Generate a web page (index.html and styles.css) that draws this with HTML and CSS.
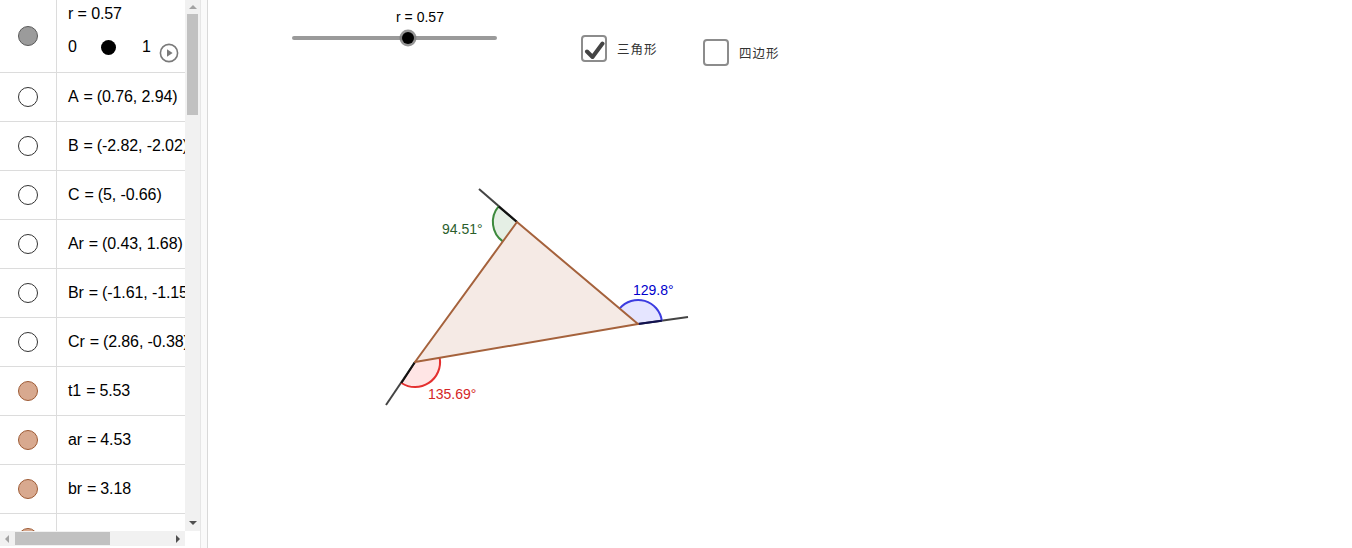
FILE: index.html
```html
<!DOCTYPE html>
<html lang="zh">
<head>
<meta charset="utf-8">
<title>GeoGebra</title>
<link rel="stylesheet" href="styles.css">
</head>
<body>
<div class="app">
  <aside class="algebra">
    <div class="list">
      <div class="row row-slider">
        <div class="marble-cell"><span class="marble marble-gray"></span></div>
        <div class="content slider-content">
          <div class="slider-name">r = 0.57</div>
          <div class="slider-line">
            <span class="min">0</span>
            <span class="dot"></span>
            <span class="max">1</span>
            <svg class="play" width="20" height="20" viewBox="0 0 20 20"><circle cx="10" cy="10" r="8.6" fill="none" stroke="#7a7a7a" stroke-width="1.6"/><path d="M8 6.2 L13.6 10 L8 13.8 Z" fill="#7a7a7a"/></svg>
          </div>
        </div>
      </div>
      <div class="row"><div class="marble-cell"><span class="marble"></span></div><div class="content">A<span class="eq">=</span>(0.76, 2.94)</div></div>
      <div class="row"><div class="marble-cell"><span class="marble"></span></div><div class="content">B<span class="eq">=</span>(-2.82, -2.02)</div></div>
      <div class="row"><div class="marble-cell"><span class="marble"></span></div><div class="content">C<span class="eq">=</span>(5, -0.66)</div></div>
      <div class="row"><div class="marble-cell"><span class="marble"></span></div><div class="content">Ar<span class="eq">=</span>(0.43, 1.68)</div></div>
      <div class="row"><div class="marble-cell"><span class="marble"></span></div><div class="content">Br<span class="eq">=</span>(-1.61, -1.15)</div></div>
      <div class="row"><div class="marble-cell"><span class="marble"></span></div><div class="content">Cr<span class="eq">=</span>(2.86, -0.38)</div></div>
      <div class="row"><div class="marble-cell"><span class="marble marble-brown"></span></div><div class="content">t1<span class="eq">=</span>5.53</div></div>
      <div class="row"><div class="marble-cell"><span class="marble marble-brown"></span></div><div class="content">ar<span class="eq">=</span>4.53</div></div>
      <div class="row"><div class="marble-cell"><span class="marble marble-brown"></span></div><div class="content">br<span class="eq">=</span>3.18</div></div>
      <div class="row"><div class="marble-cell"><span class="marble marble-brown"></span></div><div class="content"></div></div>
    </div>
    <div class="vscroll">
      <span class="arrow arrow-up"></span>
      <div class="vtrack"><div class="vthumb"></div></div>
      <span class="arrow arrow-down"></span>
    </div>
    <div class="hscroll">
      <span class="arrow arrow-left"></span>
      <div class="htrack"><div class="hthumb"></div></div>
      <span class="arrow arrow-right"></span>
    </div>
    <div class="corner"></div>
  </aside>
  <div class="splitter"></div>
  <main class="graphics">
    <svg class="canvas" width="1144" height="548" viewBox="208 0 1144 548">
      <!-- slider r -->
      <text x="420" y="22" class="slider-label" text-anchor="middle">r = 0.57</text>
      <line x1="294" y1="38" x2="495" y2="38" stroke="#9a9a9a" stroke-width="4" stroke-linecap="round"/>
      <circle cx="408" cy="38" r="8.5" fill="#7a7a7a" fill-opacity="0.8"/>
      <circle cx="408" cy="38" r="6" fill="#000"/>

      <!-- triangle -->
      <polygon points="517,222 638,324 415,362" fill="#993300" fill-opacity="0.1" stroke="none"/>

      <!-- extension lines -->
      <line x1="517" y1="222" x2="479" y2="189" stroke="#444" stroke-width="2"/>
      <line x1="638" y1="324" x2="688" y2="317" stroke="#444" stroke-width="2"/>
      <line x1="415" y1="362" x2="386" y2="405" stroke="#444" stroke-width="2"/>

      <!-- angle at top (green) -->
      <path d="M517 222 L498.6 206.4 A24 24 0 0 0 502.8 241.4 Z" fill="#006400" fill-opacity="0.1" stroke="none"/>
      <path d="M498.6 206.4 A24 24 0 0 0 502.8 241.4" fill="none" stroke="#3d8a3d" stroke-width="2"/>
      <line x1="517" y1="222" x2="498.6" y2="206.4" stroke="#111" stroke-width="2"/>

      <!-- angle at right (blue) -->
      <path d="M638 324 L661.8 320.7 A24 24 0 0 0 619.7 308.4 Z" fill="#0000ff" fill-opacity="0.1" stroke="none"/>
      <path d="M661.8 320.7 A24 24 0 0 0 619.7 308.4" fill="none" stroke="#3c3ce0" stroke-width="2"/>
      <line x1="638" y1="324" x2="661.8" y2="320.7" stroke="#101050" stroke-width="2"/>

      <!-- angle at left (red) -->
      <path d="M415 362 L439.7 357.8 A25 25 0 0 1 401.4 383 Z" fill="#ff0000" fill-opacity="0.1" stroke="none"/>
      <path d="M439.7 357.8 A25 25 0 0 1 401.4 383" fill="none" stroke="#e43030" stroke-width="2"/>
      <line x1="415" y1="362" x2="401.4" y2="383" stroke="#111" stroke-width="2"/>

      <!-- triangle edges -->
      <polygon points="517,222 638,324 415,362" fill="none" stroke="#a5623c" stroke-width="2" stroke-linejoin="round"/>

      <!-- angle labels -->
      <text x="442" y="234" class="angle-label" fill="#2b5e2b">94.51°</text>
      <text x="633" y="295" class="angle-label" fill="#0000cc">129.8°</text>
      <text x="428" y="399" class="angle-label" fill="#d42626">135.69°</text>
    </svg>
    <label class="check check-tri">
      <span class="box box-checked"><svg width="22" height="22" viewBox="0 0 22 22"><path d="M4 13.5 L9.5 19 L19.5 5.5" fill="none" stroke="#444" stroke-width="4" stroke-linecap="round" stroke-linejoin="round"/></svg></span>
      <span class="check-text">三角形</span>
    </label>
    <label class="check check-quad">
      <span class="box"></span>
      <span class="check-text">四边形</span>
    </label>
  </main>
</div>
</body>
</html>
```
FILE: styles.css
```css
html, body {
  margin: 0;
  padding: 0;
  background: #fff;
}
body {
  font-family: "Liberation Sans", Arial, sans-serif;
  color: #000;
  overflow: hidden;
}
.app {
  display: flex;
  width: 1352px;
  height: 548px;
}
.algebra {
  width: 200px;
  height: 548px;
  display: grid;
  grid-template-columns: 185px 15px;
  grid-template-rows: 531px 15px 1fr;
  background: #fff;
}
.list {
  overflow: hidden;
  grid-column: 1;
  grid-row: 1;
}
.row {
  display: flex;
  height: 48px;
  border-bottom: 1px solid #dcdcdc;
}
.row-slider {
  height: 72px;
}
.marble-cell {
  width: 56px;
  flex: none;
  border-right: 1px solid #dcdcdc;
  display: flex;
  align-items: center;
  justify-content: center;
}
.marble {
  width: 18px;
  height: 18px;
  border-radius: 50%;
  border: 1.3px solid #333;
  background: #fff;
  display: block;
}
.marble-gray {
  background: #9b9b9b;
  border-color: #5a5a5a;
}
.marble-brown {
  background: #d8a98f;
  border-color: #9e5b35;
}
.content {
  padding-left: 11px;
  display: flex;
  align-items: center;
  font-size: 16px;
  white-space: nowrap;
  overflow: hidden;
  flex: 1;
  letter-spacing: -0.1px;
}
.eq {
  margin: 0 4px 0 5px;
}
.slider-content {
  flex-direction: column;
  align-items: flex-start;
  justify-content: flex-start;
}
.slider-name {
  margin-top: 5px;
  line-height: 18px;
}
.slider-line {
  display: flex;
  align-items: center;
  margin-top: 15px;
  height: 18px;
}
.slider-line .min {
  width: 33px;
}
.slider-line .dot {
  width: 15px;
  height: 15px;
  border-radius: 50%;
  background: #000;
  display: block;
}
.slider-line .max {
  margin-left: 26px;
}
.slider-line .play {
  margin-left: 8px;
  margin-top: 12px;
  display: block;
}
.vscroll {
  grid-column: 2;
  grid-row: 1;
  background: #f1f1f1;
  display: flex;
  flex-direction: column;
  align-items: center;
}
.vtrack {
  flex: 1;
  width: 100%;
  padding: 0 2px;
  box-sizing: border-box;
}
.vthumb {
  height: 101px;
  background: #c1c1c1;
}
.hscroll {
  grid-column: 1;
  grid-row: 2;
  background: #f1f1f1;
  display: flex;
  align-items: center;
}
.htrack {
  flex: 1;
  height: 100%;
  padding: 1px 0;
  box-sizing: border-box;
}
.hthumb {
  margin-left: 1px;
  width: 95px;
  height: 100%;
  background: #c1c1c1;
}
.corner {
  grid-column: 2;
  grid-row: 2;
  background: #fff;
}
.arrow {
  width: 0;
  height: 0;
  flex: none;
  display: block;
}
.arrow-up {
  margin: 5px 0 5px;
  border-left: 4px solid transparent;
  border-right: 4px solid transparent;
  border-bottom: 4px solid #a3a3a3;
}
.arrow-down {
  margin: 6px 0 6px;
  border-left: 4px solid transparent;
  border-right: 4px solid transparent;
  border-top: 4px solid #505050;
}
.arrow-left {
  margin: 0 5px 0 5px;
  border-top: 4px solid transparent;
  border-bottom: 4px solid transparent;
  border-right: 4px solid #a3a3a3;
}
.arrow-right {
  margin: 0 5px 0 5px;
  border-top: 4px solid transparent;
  border-bottom: 4px solid transparent;
  border-left: 4px solid #505050;
}
.splitter {
  width: 6px;
  flex: none;
  border-left: 1px solid #e6e6e6;
  border-right: 1px solid #d9d9d9;
  background: #fafafa;
}
.graphics {
  position: relative;
  flex: 1;
  height: 548px;
  overflow: hidden;
}
.canvas {
  display: block;
}
.slider-label {
  font-family: "Liberation Sans", Arial, sans-serif;
  font-size: 14px;
  fill: #000;
}
.angle-label {
  font-family: "Liberation Sans", Arial, sans-serif;
  font-size: 14px;
}
.check {
  position: absolute;
  display: flex;
  align-items: center;
  gap: 10px;
}
.check-tri {
  left: 373px;
  top: 35px;
}
.check-quad {
  left: 495px;
  top: 39px;
}
.box {
  width: 22px;
  height: 23px;
  border: 2px solid #8c8c8c;
  border-radius: 4px;
  background: #fff;
  display: flex;
  align-items: center;
  justify-content: center;
}
.check-text {
  font-family: "Noto Sans CJK SC", "Noto Sans CJK JP", sans-serif;
  font-size: 12.5px;
  color: #333;
  letter-spacing: 1px;
}
```
